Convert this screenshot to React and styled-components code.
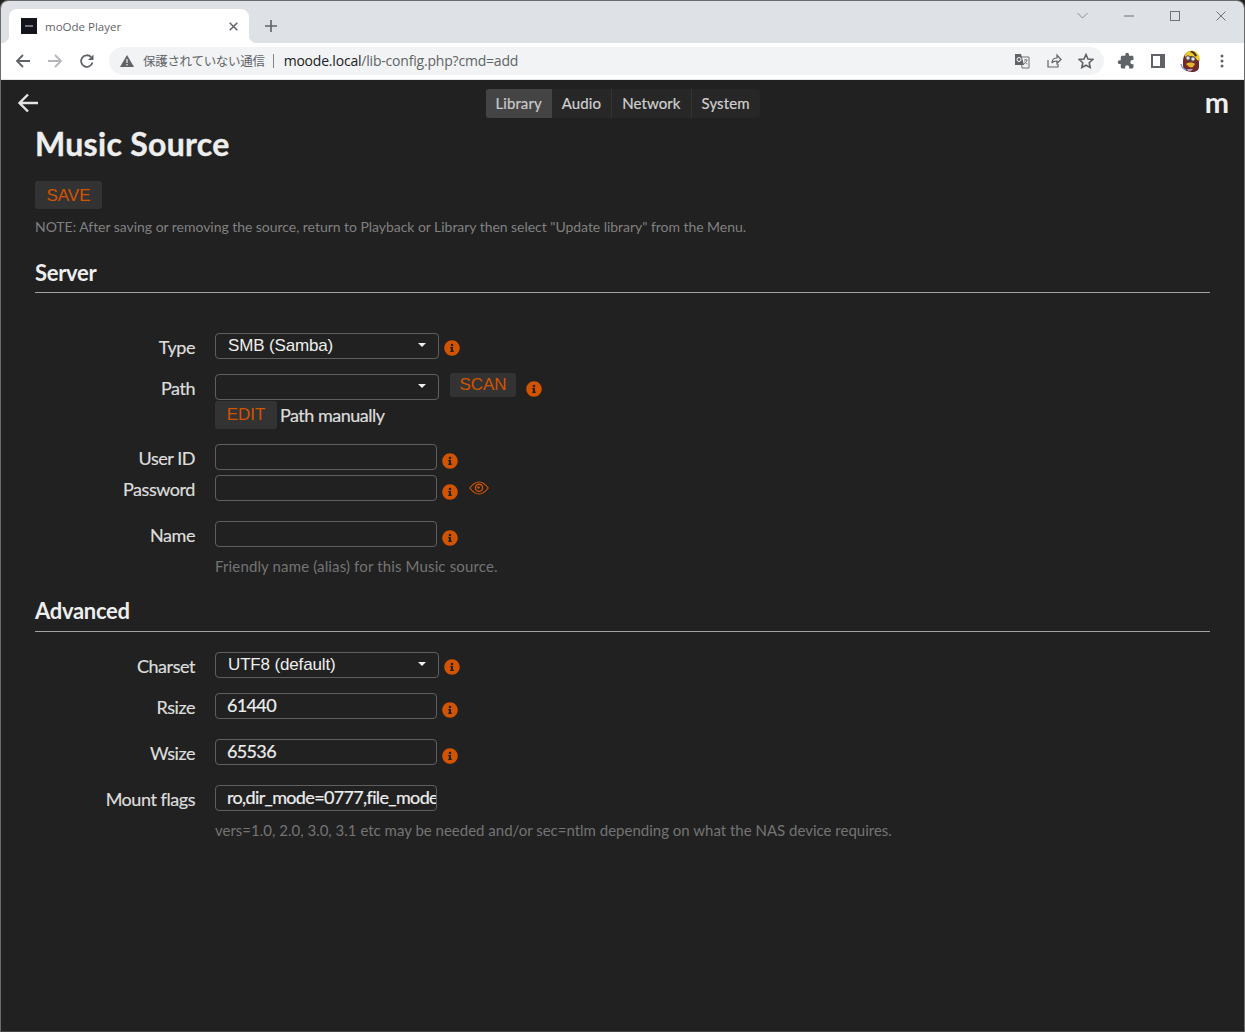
import React from 'react';
import styled, { createGlobalStyle } from 'styled-components';
import { FaInfoCircle } from 'react-icons/fa';
import { MdExtension } from 'react-icons/md';

const Global = createGlobalStyle`
  html, body { margin: 0; padding: 0; height: 100%; background: #212121; }
  #root { height: 100%; }
  * { box-sizing: border-box; }
`;

const Win = styled.div`
  width: 1245px; height: 1032px; overflow: hidden; display: flex; flex-direction: column;
  background: #212121; border: 1px solid #6b6b6b; border-bottom-color: #444; border-radius: 8px 8px 0 0;
  font-family: Lato, sans-serif;
`;
const TabStrip = styled.div`
  height: 42px; flex: none; background: #dee1e6; display: flex; align-items: flex-end; padding-left: 8px;
`;
const Tab = styled.div`
  width: 240px; height: 34px; background: #fff; border-radius: 8px 8px 0 0; display: flex; align-items: center;
  padding: 0 0 0 12px; font: 11.5px "Open Sans", sans-serif; color: #5f6368; position: relative; flex: none;
  &::before, &::after { content: ''; position: absolute; bottom: 0; width: 8px; height: 8px; }
  &::before { left: -8px; background: radial-gradient(circle at 0 0, transparent 8px, #fff 8.5px); }
  &::after { right: -8px; background: radial-gradient(circle at 100% 0, transparent 8px, #fff 8.5px); }
`;
const Favicon = styled.div`
  width: 16px; height: 16px; background: #14141c; margin-right: 8px; flex: none;
  display: flex; align-items: center; justify-content: center;
  &::after { content: ''; width: 8px; height: 2px; background: #777; }
`;
const TabTitle = styled.span` flex: 1; `;
const TabClose = styled.svg` width: 9px; height: 9px; margin-right: 11px; flex: none; `;
const NewTab = styled.svg` width: 14px; height: 14px; margin: 0 0 10px 15px; flex: none; `;
const WinControls = styled.div`
  margin-left: auto; align-self: flex-start; display: flex; align-items: center; height: 30px; padding-right: 18px; gap: 36px;
`;
const Toolbar = styled.div`
  height: 37px; flex: none; background: #fff; border-bottom: 1px solid #e4e6e9; display: flex; align-items: center;
  padding: 0 0 1px 14px;
`;
const NavIcon = styled.svg` width: 16px; height: 16px; flex: none; margin-right: 16px; `;
const Omnibox = styled.div`
  width: 995px; height: 28px; border-radius: 14px; background: #f1f3f4; margin-left: -2px; display: flex; align-items: center; padding: 0 10px 0 11px;
  flex: none;
`;
const Warn = styled.svg` width: 14px; height: 14px; flex: none; margin-right: 9px; `;
const Insecure = styled.span`
  font: 12.5px "Noto Sans CJK JP", sans-serif; color: #5f6368; letter-spacing: -0.3px; padding-right: 8px; border-right: 1px solid #80868b; line-height: 14px;
`;
const Url = styled.span`
  font: 14px "Open Sans", sans-serif; color: #5f6368; margin-left: 10px; letter-spacing: -0.2px;
  b { font-weight: 400; color: #202124; }
`;
const OmniIcons = styled.div` margin-left: auto; display: flex; align-items: center; gap: 16px; `;
const ToolIcon = styled.svg` width: 16px; height: 16px; flex: none; `;
const Actions = styled.div` display: flex; align-items: center; margin-left: 13px; `;
const Ext = styled(MdExtension)` width: 18px; height: 18px; color: #5f6368; transform: scaleX(-1); flex: none; `;
const SidePanel = styled.svg` width: 14px; height: 14px; margin: 0 15px 0 16px; flex: none; `;
const Kebab = styled.svg` width: 4px; height: 14px; margin-left: 19px; flex: none; `;
const AvatarIcon = styled.svg` width: 21px; height: 22px; flex: none; `;
const Page = styled.div` flex: 1; background: #212121; padding: 0 34px; `;
const Nav = styled.div`
  height: 45px; display: grid; grid-template-columns: 1fr auto 1fr; align-items: start; margin: 0 0 0 -17px;
`;
const BackArrow = styled.svg` width: 22px; height: 20px; margin-top: 13px; `;
const Tabs = styled.div` display: flex; background: #272727; border-radius: 3px; height: 29px; margin: 9px 0 0 18px; `;
const NavTab = styled.div`
  height: 29px; padding: 0 10px 2px ${p => p.$first ? '9px' : '10px'}; display: flex; align-items: center; font-size: 15px;
  letter-spacing: 0.1px; -webkit-text-stroke: 0.2px;
  color: ${p => p.$active ? '#c9c9c9' : '#d0d0d0'}; background: ${p => p.$active ? '#444' : 'transparent'};
  border-radius: ${p => p.$active ? '3px 0 0 3px' : '0'};
  border-left: ${p => p.$sep ? '1px solid #333' : '0'};
`;
const Logo = styled.div`
  justify-self: end; font-size: 29px; font-weight: 700; color: #eee; line-height: 28px; margin: 8px -19px 0 0;
`;
const Title = styled.h1`
  margin: 0; font-size: 32px; font-weight: 700; line-height: 38px; color: #eee; height: 56px; letter-spacing: 0.3px; -webkit-text-stroke: 0.4px;
`;
const BaseBtn = styled.div`
  background: #333; color: #d35400; border-radius: 3px; font-family: "Liberation Sans", Arial, sans-serif; font-size: 17px;
  display: inline-flex; align-items: center; justify-content: center; flex: none;
`;
const Save = styled(BaseBtn)` width: 67px; height: 28px; padding-top: 1px; `;
const Note = styled.p`
  margin: 9px 0 0; font-size: 14px; line-height: 18px; color: #808080; letter-spacing: -0.04px;
`;
const Section = styled.div`
  margin-top: ${p => p.$top}px; height: ${p => p.$h}px; border-bottom: 1px solid #a3a3a3;
  font-size: 22px; font-weight: 700; color: #eee; line-height: 28px; width: 1175px; letter-spacing: -0.3px;
`;
const Row = styled.div`
  display: grid; grid-template-columns: 160px 1fr; column-gap: 20px; align-items: start; margin-top: ${p => p.$top}px; height: 26px;
`;
const Label = styled.label`
  text-align: right; font-size: 18px; color: #ddd; line-height: 24px; padding-top: 2px; letter-spacing: -0.45px; -webkit-text-stroke: 0.2px;
`;
const Controls = styled.div` display: flex; align-items: flex-start; `;
const Select = styled.div`
  width: 224px; height: 26px; border: 1px solid #5f5f5f; border-radius: 4px; display: flex; align-items: center;
  padding: 0 12px 0 12px; font: 17px "Liberation Sans", Arial, sans-serif; color: #eee; flex: none; letter-spacing: -0.15px;
  &::after { content: ''; border: 4px solid transparent; border-top-color: #eee; border-bottom: 0; margin: 0 0 2px auto; }
`;
const Input = styled.div`
  width: 222px; height: 26px; border: 1px solid #5f5f5f; border-radius: 4px; padding: 0 0 2px 11px; display: flex; align-items: center;
  font-size: 18px; color: #eee; white-space: nowrap; overflow: hidden; flex: none; letter-spacing: -0.65px; -webkit-text-stroke: 0.2px;
`;
const Info = styled(FaInfoCircle)`
  width: 16px; height: 16px; color: #d35400; flex: none; margin: ${p => p.$mt ?? 9}px 0 0 ${p => p.$ml ?? 5}px;
`;
const Scan = styled(BaseBtn)` width: 66px; height: 24px; margin: -1px 0 0 11px; `;
const Edit = styled(BaseBtn)` width: 62px; height: 28px; `;
const ManualRow = styled.div`
  display: flex; align-items: center; margin: 1px 0 0 180px; font-size: 18px; color: #ddd; gap: 3px; letter-spacing: -0.5px; -webkit-text-stroke: 0.2px;
  ${BaseBtn} { letter-spacing: 0; -webkit-text-stroke: 0; }
`;
const EyeIcon = styled.svg` width: 20px; height: 14px; margin: 6px 0 0 11px; flex: none; `;
const Help = styled.div`
  margin: ${p => p.$top}px 0 0 180px; font-size: 15px; line-height: 18px; color: #747474; letter-spacing: ${p => p.$ls ?? 0}px;
`;

const Avatar = () => (
  <AvatarIcon viewBox="0 0 21 22">
    <path d="M3 11c0-6 4-10 8-10s8 3 8 9v7c0 3-3 5-7 5-5 0-9-3-9-6z" fill="#6f2b2a" />
    <path d="M5 5c1-3 4-4.500 7-4.500s6 2 7.500 6L20 11l-3-1C15 6 10 5 5 7z" fill="#ecc92c" />
    <path d="M11 1c3 0 5 2 6 5l-2 .5C14 4 12 2.500 10 2z" fill="#3a2a20" />
    <circle cx="8" cy="8" r="2.200" fill="#dfe6ea" stroke="#4a4a4a" />
    <circle cx="13" cy="9" r="2.200" fill="#dfe6ea" stroke="#4a4a4a" />
    <path d="M6 14c2-2 7-2 9 0l-2 3c-2 1-4 0-5-1z" fill="#e3b52a" />
    <path d="M7 19h6l-2 2H8z" fill="#a89fd0" />
    <path d="M1 14c.5 3 2 5 5 6" stroke="#7d9bd0" strokeWidth="1.500" fill="none" />
  </AvatarIcon>
);

export default function App() {
  return (
    <Win>
      <Global />
      <TabStrip>
        <Tab>
          <Favicon />
          <TabTitle>moOde Player</TabTitle>
          <TabClose viewBox="0 0 9 9"><path d="M.7.7l7.600 7.600M8.300.7L.7 8.300" stroke="#5f6368" strokeWidth="1.500" /></TabClose>
        </Tab>
        <NewTab viewBox="0 0 14 14"><path d="M7 1v12M1 7h12" stroke="#5f6368" strokeWidth="1.600" /></NewTab>
        <WinControls>
          <svg width="11" height="8" viewBox="0 0 11 8"><path d="M.5 1l5 5 5-5" stroke="#8a8c90" fill="none" /></svg>
          <svg width="10" height="2" viewBox="0 0 10 2"><path d="M0 1h10" stroke="#6f7175" /></svg>
          <svg width="10" height="10" viewBox="0 0 10 10"><rect x=".5" y=".5" width="9" height="9" stroke="#6f7175" fill="none" /></svg>
          <svg width="10" height="10" viewBox="0 0 10 10"><path d="M.5.5l9 9M9.500.5l-9 9" stroke="#6f7175" /></svg>
        </WinControls>
      </TabStrip>
      <Toolbar>
        <NavIcon viewBox="0 0 16 16"><path d="M15 8H2M8 2L2 8l6 6" stroke="#5f6368" strokeWidth="1.800" fill="none" /></NavIcon>
        <NavIcon viewBox="0 0 16 16"><path d="M1 8h13M8 2l6 6-6 6" stroke="#b4b6b9" strokeWidth="1.800" fill="none" /></NavIcon>
        <NavIcon viewBox="0 0 16 16"><path d="M13.500 9.500A5.800 5.800 0 1 1 12 4" stroke="#5f6368" strokeWidth="1.800" fill="none" /><path d="M14.500 1.500v5.500H9z" fill="#5f6368" /></NavIcon>
        <Omnibox>
          <Warn viewBox="0 0 14 14"><path d="M7 1l7 12H0z" fill="#5f6368" /><path d="M7 5v4M7 10v1.500" stroke="#f1f3f4" strokeWidth="1.200" /></Warn>
          <Insecure>保護されていない通信</Insecure>
          <Url><b>moode.local</b>/lib-config.php?cmd=add</Url>
          <OmniIcons>
            <ToolIcon viewBox="0 0 16 16"><path d="M7 4h8v11H8z" fill="#f1f3f4" stroke="#6f7378" /><path d="M10 7h3.500M11.800 6v1M13 7c-.5 2-1.500 3-3 4M10.500 8.500c.5 1 1.500 2 3 2.500" stroke="#5f6368" strokeWidth=".8" fill="none" /><path d="M1 1h6l3 11H1z" fill="#5f6368" /><circle cx="5" cy="6.500" r="2" fill="none" stroke="#fff" strokeWidth="1" /></ToolIcon>
            <ToolIcon viewBox="0 0 16 16"><path d="M2 7v7h10v-3M6 10c0-4 3-5 5-5V2l4 4.500-4 4V8c-2 0-4 0-5 2z" stroke="#5f6368" strokeWidth="1.200" fill="none" /></ToolIcon>
            <ToolIcon viewBox="0 0 16 16"><path d="M8 1.500l2 4.500 4.800.5-3.600 3.200 1 4.800L8 12.200 3.800 14.500l1-4.800L1.200 6.500 6 6z" stroke="#5f6368" strokeWidth="1.600" fill="none" /></ToolIcon>
          </OmniIcons>
        </Omnibox>
        <Actions>
          <Ext />
          <SidePanel viewBox="0 0 14 14"><rect width="14" height="14" fill="#5f6368" /><rect x="2" y="2" width="7" height="10" fill="#fff" /></SidePanel>
          <Avatar />
          <Kebab viewBox="0 0 4 14"><circle cx="2" cy="2" r="1.500" fill="#5f6368" /><circle cx="2" cy="7" r="1.500" fill="#5f6368" /><circle cx="2" cy="12" r="1.500" fill="#5f6368" /></Kebab>
        </Actions>
      </Toolbar>
      <Page>
        <Nav>
          <BackArrow viewBox="0 0 22 20"><path d="M20 10H1.500M10 1.500L1.500 10l8.500 8.500" stroke="#e4e4e4" strokeWidth="2.400" fill="none" /></BackArrow>
          <Tabs>
            <NavTab $active $first>Library</NavTab>
            <NavTab>Audio</NavTab>
            <NavTab $sep>Network</NavTab>
            <NavTab $sep>System</NavTab>
          </Tabs>
          <Logo>m</Logo>
        </Nav>
        <Title>Music Source</Title>
        <Save>SAVE</Save>
        <Note>NOTE: After saving or removing the source, return to Playback or Library then select "Update library" from the Menu.</Note>
        <Section $top={23} $h={34}>Server</Section>

        <Row $top={40}>
          <Label>Type</Label>
          <Controls><Select>SMB (Samba)</Select><Info $mt={7} /></Controls>
        </Row>
        <Row $top={15}>
          <Label>Path</Label>
          <Controls><Select /><Scan>SCAN</Scan><Info $mt={7} $ml={10} /></Controls>
        </Row>
        <ManualRow><Edit>EDIT</Edit>Path manually</ManualRow>
        <Row $top={15}>
          <Label>User ID</Label>
          <Controls><Input /><Info /></Controls>
        </Row>
        <Row $top={5}>
          <Label>Password</Label>
          <Controls>
            <Input /><Info />
            <EyeIcon viewBox="0 0 20 14">
              <path d="M.8 7C4 2.800 7 1 10 1s6 1.800 9.200 6C16 11.200 13 13 10 13S4 11.200.8 7z" fill="none" stroke="#d35400" strokeWidth="1.200" />
              <circle cx="10" cy="6.800" r="3.600" fill="none" stroke="#d35400" strokeWidth="1.400" />
              <circle cx="9.500" cy="6.500" r="1.300" fill="#d35400" />
            </EyeIcon>
          </Controls>
        </Row>
        <Row $top={20}>
          <Label>Name</Label>
          <Controls><Input /><Info /></Controls>
        </Row>
        <Help $top={10} $ls={0.14}>Friendly name (alias) for this Music source.</Help>
        <Section $top={22} $h={35}>Advanced</Section>

        <Row $top={20}>
          <Label>Charset</Label>
          <Controls><Select>UTF8 (default)</Select><Info $mt={7} /></Controls>
        </Row>
        <Row $top={15}>
          <Label>Rsize</Label>
          <Controls><Input>61440</Input><Info /></Controls>
        </Row>
        <Row $top={20}>
          <Label>Wsize</Label>
          <Controls><Input>65536</Input><Info /></Controls>
        </Row>
        <Row $top={20}>
          <Label>Mount flags</Label>
          <Controls><Input>ro,dir_mode=0777,file_mode</Input></Controls>
        </Row>
        <Help $top={10}>vers=1.0, 2.0, 3.0, 3.1 etc may be needed and/or sec=ntlm depending on what the NAS device requires.</Help>
      </Page>
    </Win>
  );
}
